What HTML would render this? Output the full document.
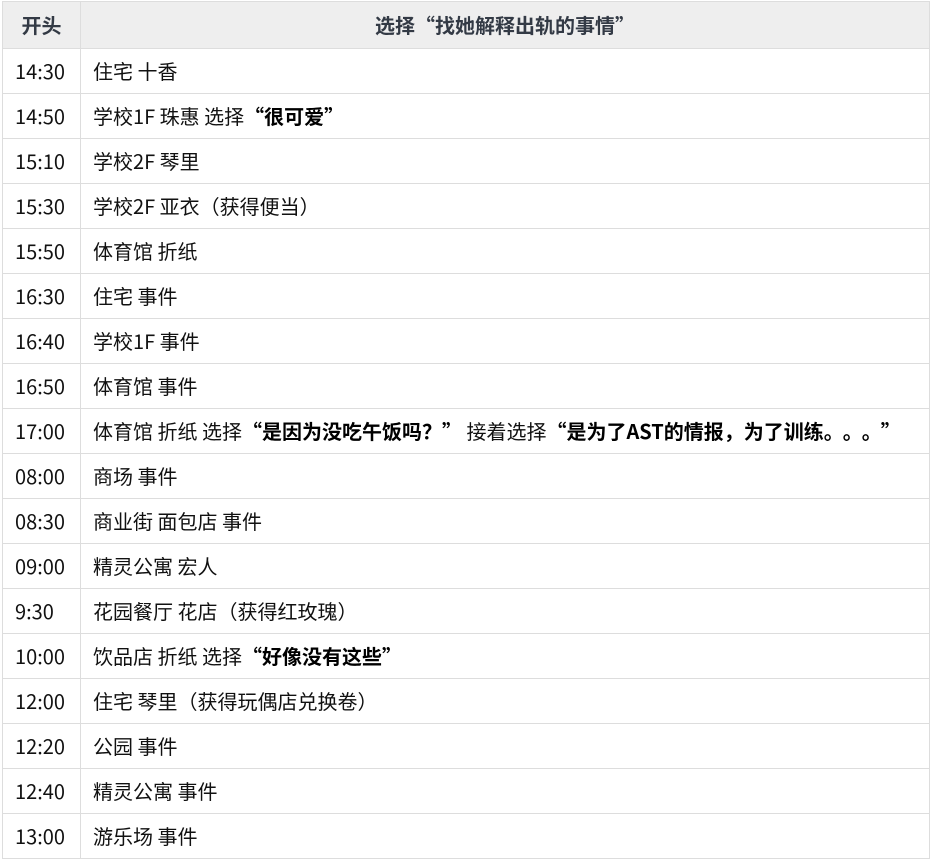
<!DOCTYPE html>
<html><head><meta charset="utf-8"><style>
body{margin:0;background:#fff;width:933px;height:860px;overflow:hidden;font-family:"Noto Sans CJK SC","Liberation Sans",sans-serif;color:#111;}
table{position:absolute;left:2px;top:1px;border-collapse:collapse;width:928px;table-layout:fixed;font-size:20px;}
td,th{border:1px solid #ddd;height:44px;padding:0 0 0 12px;white-space:nowrap;overflow:hidden;line-height:22px;}
th{background:#eee;color:#333a45;font-weight:bold;text-align:center;padding:0;height:46px;}
col.a{width:78px}
b{font-weight:bold;color:#000}
.d{letter-spacing:9px}
</style></head><body>
<table><colgroup><col class="a"><col></colgroup>
<tr><th>开头</th><th>选择“找她解释出轨的事情”</th></tr>
<tr><td>14:30</td><td>住宅 十香</td></tr>
<tr><td>14:50</td><td>学校1F 珠惠 选择<b>“很可爱”</b></td></tr>
<tr><td>15:10</td><td>学校2F 琴里</td></tr>
<tr><td>15:30</td><td>学校2F 亚衣（获得便当）</td></tr>
<tr><td>15:50</td><td>体育馆 折纸</td></tr>
<tr><td>16:30</td><td>住宅 事件</td></tr>
<tr><td>16:40</td><td>学校1F 事件</td></tr>
<tr><td>16:50</td><td>体育馆 事件</td></tr>
<tr><td>17:00</td><td>体育馆 折纸 选择<b>“是因为没吃午饭吗？”</b> 接着选择<b>“是为了AST的情报，为了训练<span class="d">。。。</span>”</b></td></tr>
<tr><td>08:00</td><td>商场 事件</td></tr>
<tr><td>08:30</td><td>商业街 面包店 事件</td></tr>
<tr><td>09:00</td><td>精灵公寓 宏人</td></tr>
<tr><td>9:30</td><td>花园餐厅 花店（获得红玫瑰）</td></tr>
<tr><td>10:00</td><td>饮品店 折纸 选择<b>“好像没有这些”</b></td></tr>
<tr><td>12:00</td><td>住宅 琴里（获得玩偶店兑换卷）</td></tr>
<tr><td>12:20</td><td>公园 事件</td></tr>
<tr><td>12:40</td><td>精灵公寓 事件</td></tr>
<tr><td>13:00</td><td>游乐场 事件</td></tr>
</table>
</body></html>
